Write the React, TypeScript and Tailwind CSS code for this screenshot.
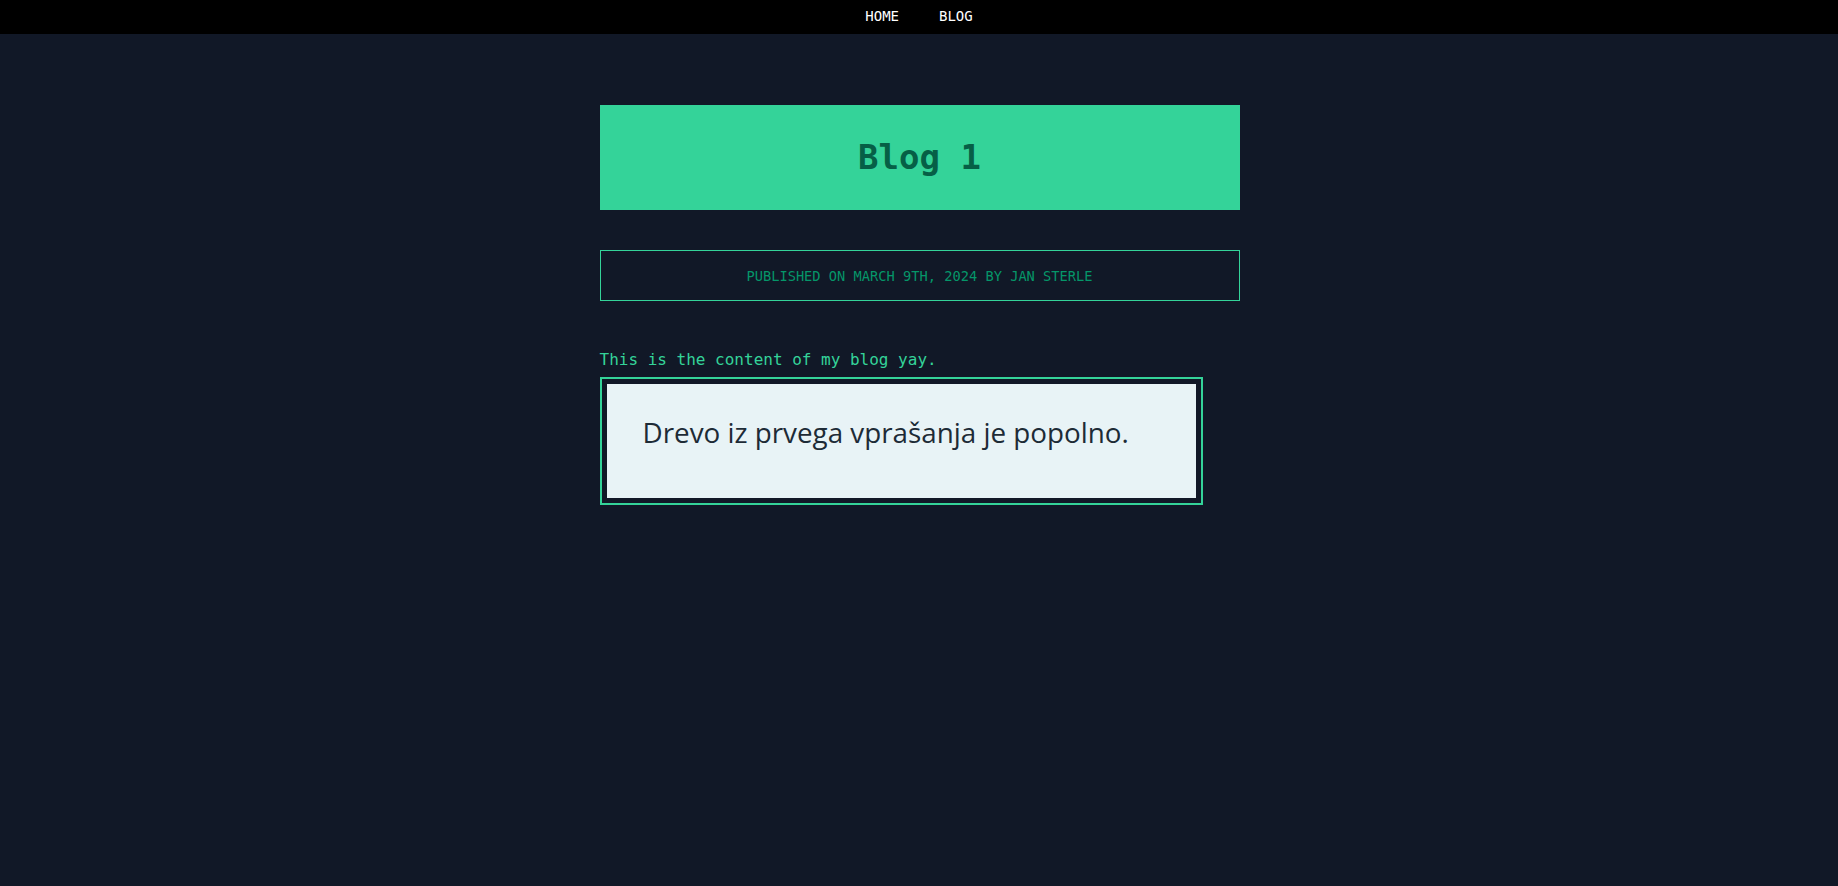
const mono = { fontFamily: '"DejaVu Sans Mono", "Liberation Mono", monospace' };

function Nav() {
  return (
    <nav className="h-[34px] bg-black flex items-center justify-center">
      <a href="#" className="px-5 text-[14px] leading-none text-white pb-[2px]">HOME</a>
      <a href="#" className="px-5 text-[14px] leading-none text-white pb-[2px]">BLOG</a>
    </nav>
  );
}

function Screenshot() {
  // image of a quiz answer, drawn as a box with text
  return (
    <div className="w-[603px] mt-[5px] border-2 border-[#34d399] p-[5px]">
      <div className="h-[114px] bg-[#e8f3f6] pl-[36px] pt-[28px]">
        <p
          className="text-[27.8px] leading-[40px] text-[#1d2b36]"
          style={{ fontFamily: '"Open Sans", "Noto Sans", sans-serif' }}
        >
          Drevo iz prvega vprašanja je popolno.
        </p>
      </div>
    </div>
  );
}

export default function App() {
  return (
    <div className="min-h-screen bg-[#111827]" style={mono}>
      <Nav />
      <main className="w-[640px] mx-auto pl-[1px] box-content">
        <div className="mt-[71px] h-[105px] bg-[#34d399] flex items-center justify-center">
          <h1 className="text-[34px] font-bold text-[#065f46] leading-none pb-[2px]">Blog 1</h1>
        </div>

        <div className="mt-10 h-[51px] border border-[#34d399] flex items-center justify-center">
          <span className="text-[13.7px] text-[#059669] uppercase pt-[1px]">
            Published on March 9th, 2024 by Jan Sterle
          </span>
        </div>

        <p className="mt-[47px] text-[16px] leading-6 text-[#34d399]">
          This is the content of my blog yay.
        </p>
        <Screenshot />
      </main>
    </div>
  );
}
